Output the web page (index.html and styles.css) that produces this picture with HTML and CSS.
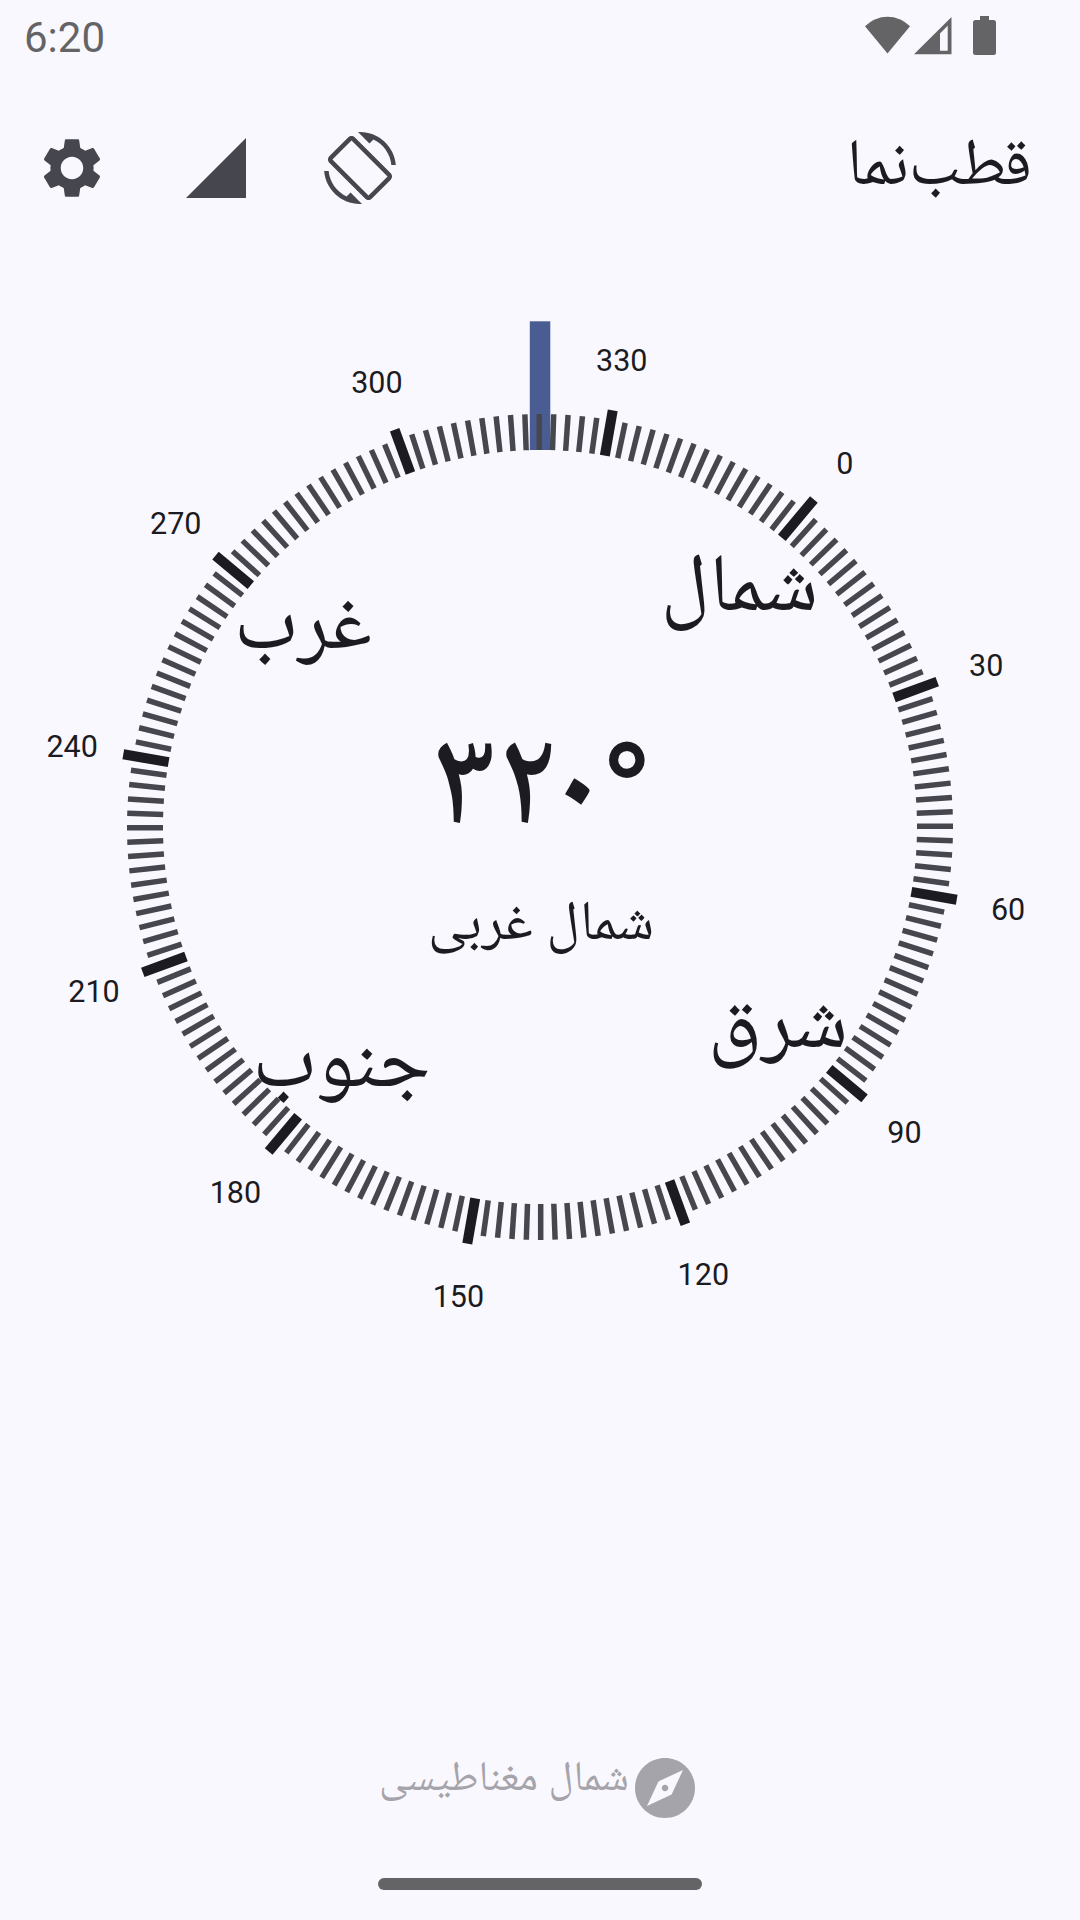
FILE: index.html
```html
<!DOCTYPE html>
<html lang="fa" dir="rtl">
<head>
<meta charset="utf-8">
<title>قطب‌نما</title>
<link rel="stylesheet" href="styles.css">
</head>
<body>
<div class="screen">
  <div class="status-bar" dir="ltr">
    <span class="clock">6:20</span>
    <svg class="status-icons" width="132" height="40" viewBox="0 0 132 40">
      <path d="M22.5 37.5 0 10.3C6.500 4 14 .7 22.500 .7S38.500 4 45 10.300z"/>
      <path fill-rule="evenodd" d="M49 38.300 86.500 1v37.300zM75 34.700h7.700V9.800L75 17.500z"/>
      <path d="M115 0h9v4h4.500q2.500 0 2.500 2.500v30q0 2.500-2.500 2.500h-18q-2.500 0-2.500-2.500v-30q0-2.500 2.500-2.500h4.500z"/>
    </svg>
  </div>
  <header class="toolbar">
    <h1 class="title">قطب‌نما</h1>
    <nav class="actions">
      <svg class="icon" viewBox="0 0 24 24"><path d="M16.480 2.520c3.270 1.550 5.610 4.720 5.970 8.480h1.500C23.440 4.840 18.290 0 12 0l-.66.030 3.810 3.810 1.330-1.320zm-6.250-.77c-.59-.59-1.540-.59-2.120 0L1.750 8.110c-.59.59-.59 1.540 0 2.120l12.020 12.020c.59.59 1.540.59 2.120 0l6.360-6.360c.59-.59.59-1.540 0-2.120L10.230 1.750zm4.600 19.440L2.810 9.170l6.360-6.360 12.020 12.020-6.360 6.360zm-7.310.29C4.250 19.940 1.910 16.760 1.550 13H.05C.56 19.160 5.710 24 12 24l.66-.030-3.810-3.810-1.330 1.320z"/></svg>
      <svg class="icon" viewBox="0 0 24 24"><path d="M2 22h20V2z"/></svg>
      <svg class="icon" viewBox="0 0 24 24"><path d="M19.140 12.940c.04-.3.06-.61.06-.94 0-.32-.02-.64-.07-.94l2.030-1.580c.18-.14.23-.41.12-.61l-1.920-3.320c-.12-.22-.37-.29-.59-.22l-2.390.96c-.5-.38-1.030-.7-1.620-.94l-.36-2.540c-.04-.24-.24-.41-.48-.41h-3.840c-.24 0-.43.17-.47.41l-.36 2.540c-.59.24-1.130.57-1.620.94l-2.390-.96c-.22-.08-.47 0-.59.22L2.740 8.870c-.12.21-.08.47.12.61l2.030 1.580c-.05.3-.09.63-.09.94s.02.64.07.94l-2.030 1.580c-.18.14-.23.41-.12.61l1.920 3.320c.12.22.37.29.59.22l2.390-.96c.5.38 1.030.7 1.620.94l.36 2.540c.05.24.24.41.48.41h3.840c.24 0 .44-.17.47-.41l.36-2.540c.59-.24 1.130-.56 1.620-.94l2.390.96c.22.08.47 0 .59-.22l1.920-3.320c.12-.22.07-.47-.12-.61l-2.010-1.580zM12 15.750c-2.070 0-3.750-1.680-3.750-3.750s1.680-3.750 3.750-3.750 3.750 1.680 3.750 3.750-1.680 3.750-3.750 3.750z"/></svg>
    </nav>
  </header>
  <main class="dial-area">
    <svg class="dial" width="1080" height="1040" viewBox="-540 -527 1080 1040" direction="ltr">
      <rect class="pointer" x="-10.200" y="-505.700" width="20.500" height="128.700"/>
      <g id="ticks"></g>
      <g id="degrees" class="degrees"></g>
      <g class="cardinals">
        <text x="199.500" y="-206.500">شمال</text>
        <text x="238" y="230.500">شرق</text>
        <text x="-198.500" y="270">جنوب</text>
        <text x="-237" y="-168">غرب</text>
      </g>
      <text class="heading" x="0.500" y="15">۳۲۰°</text>
      <text class="heading-name" x="1" y="120">شمال غربی</text>
    </svg>
  </main>
  <footer class="north-type">
    <svg class="icon" viewBox="0 0 24 24"><path d="M12 10.900c-.61 0-1.100.49-1.100 1.100s.49 1.100 1.100 1.100c.61 0 1.100-.49 1.100-1.100s-.49-1.100-1.100-1.100zM12 2C6.480 2 2 6.480 2 12s4.480 10 10 10 10-4.480 10-10S17.520 2 12 2zm2.190 12.190L6 18l3.810-8.190L18 6l-3.810 8.190z"/></svg>
    <span class="north-label">شمال مغناطیسی</span>
  </footer>
  <div class="home-bar"></div>
</div>
<script src="dial.js"></script>
</body>
</html>
```
FILE: styles.css
```css
* { box-sizing: border-box; margin: 0; }

body {
  background: #faf8ff;
  color: #1b1b21;
  font-family: Roboto, "Noto Naskh Arabic UI", "Noto Naskh Arabic", "Noto Sans Arabic", "DejaVu Sans", sans-serif;
}

.screen {
  width: 1080px;
  height: 1920px;
  display: flex;
  flex-direction: column;
  align-items: center;
  overflow: hidden;
}

.status-bar {
  width: 100%;
  height: 96px;
  padding: 16px 84px 0 24px;
  display: flex;
  justify-content: space-between;
  align-items: flex-start;
  color: #646466;
}

.clock { font-size: 42px; line-height: 44px; }
.status-icons { fill: #646466; margin-right: -1px; }

.toolbar {
  width: 100%;
  height: 144px;
  padding: 0 48px 0 36px;
  display: flex;
  justify-content: space-between;
  align-items: center;
}

.title { font-size: 66px; font-weight: 400; line-height: 80px; padding-top: 6px; }
.actions { display: flex; gap: 72px; }
.icon { width: 72px; height: 72px; fill: #46464f; flex: none; }

.dial-area { height: 1100px; padding-top: 60px; }
.dial { display: block; }
.dial text { text-anchor: middle; fill: #1b1b21; }
.pointer { fill: #495d92; }
.tick { stroke: #46464f; stroke-width: 5.500; }
.tick-major { stroke: #1b1b21; stroke-width: 10; }
.degrees { font-size: 30.500px; }
.cardinals { font-size: 82px; }
.heading { font-size: 139px; font-weight: 500; }
.heading-name { font-size: 56px; }

.north-type {
  margin-top: 412px;
  height: 72px;
  display: flex;
  align-items: center;
  margin-right: 379px;
  align-self: flex-start;
  color: #a5a4aa;
}
.north-type .icon { fill: #a5a4aa; }
.north-label { font-size: 42px; line-height: 60px; padding-bottom: 12px; }

.home-bar {
  margin-top: 54px;
  width: 324px;
  height: 12px;
  border-radius: 6px;
  background: #646466;
}
```
FILE: dial.js
```js
const SVG_NS = "http://www.w3.org/2000/svg";
const heading = 320.1;
const ticks = document.getElementById("ticks");
const degrees = document.getElementById("degrees");

for (let deg = 0; deg < 360; deg += 2) {
  const major = deg % 30 === 0;
  const outer = deg === 0 ? 427 : major ? 423 : 413;
  const line = document.createElementNS(SVG_NS, "line");
  line.setAttribute("class", major ? "tick tick-major" : "tick");
  line.setAttribute("y1", -outer);
  line.setAttribute("y2", -377);
  line.setAttribute("transform", `rotate(${deg - heading})`);
  ticks.appendChild(line);

  if (major) {
    const angle = (deg - heading) * Math.PI / 180;
    const label = document.createElementNS(SVG_NS, "text");
    label.setAttribute("x", 0.1 + 475 * Math.sin(angle));
    label.setAttribute("y", 11.8 - 475 * Math.cos(angle));
    label.textContent = deg;
    degrees.appendChild(label);
  }
}
```
